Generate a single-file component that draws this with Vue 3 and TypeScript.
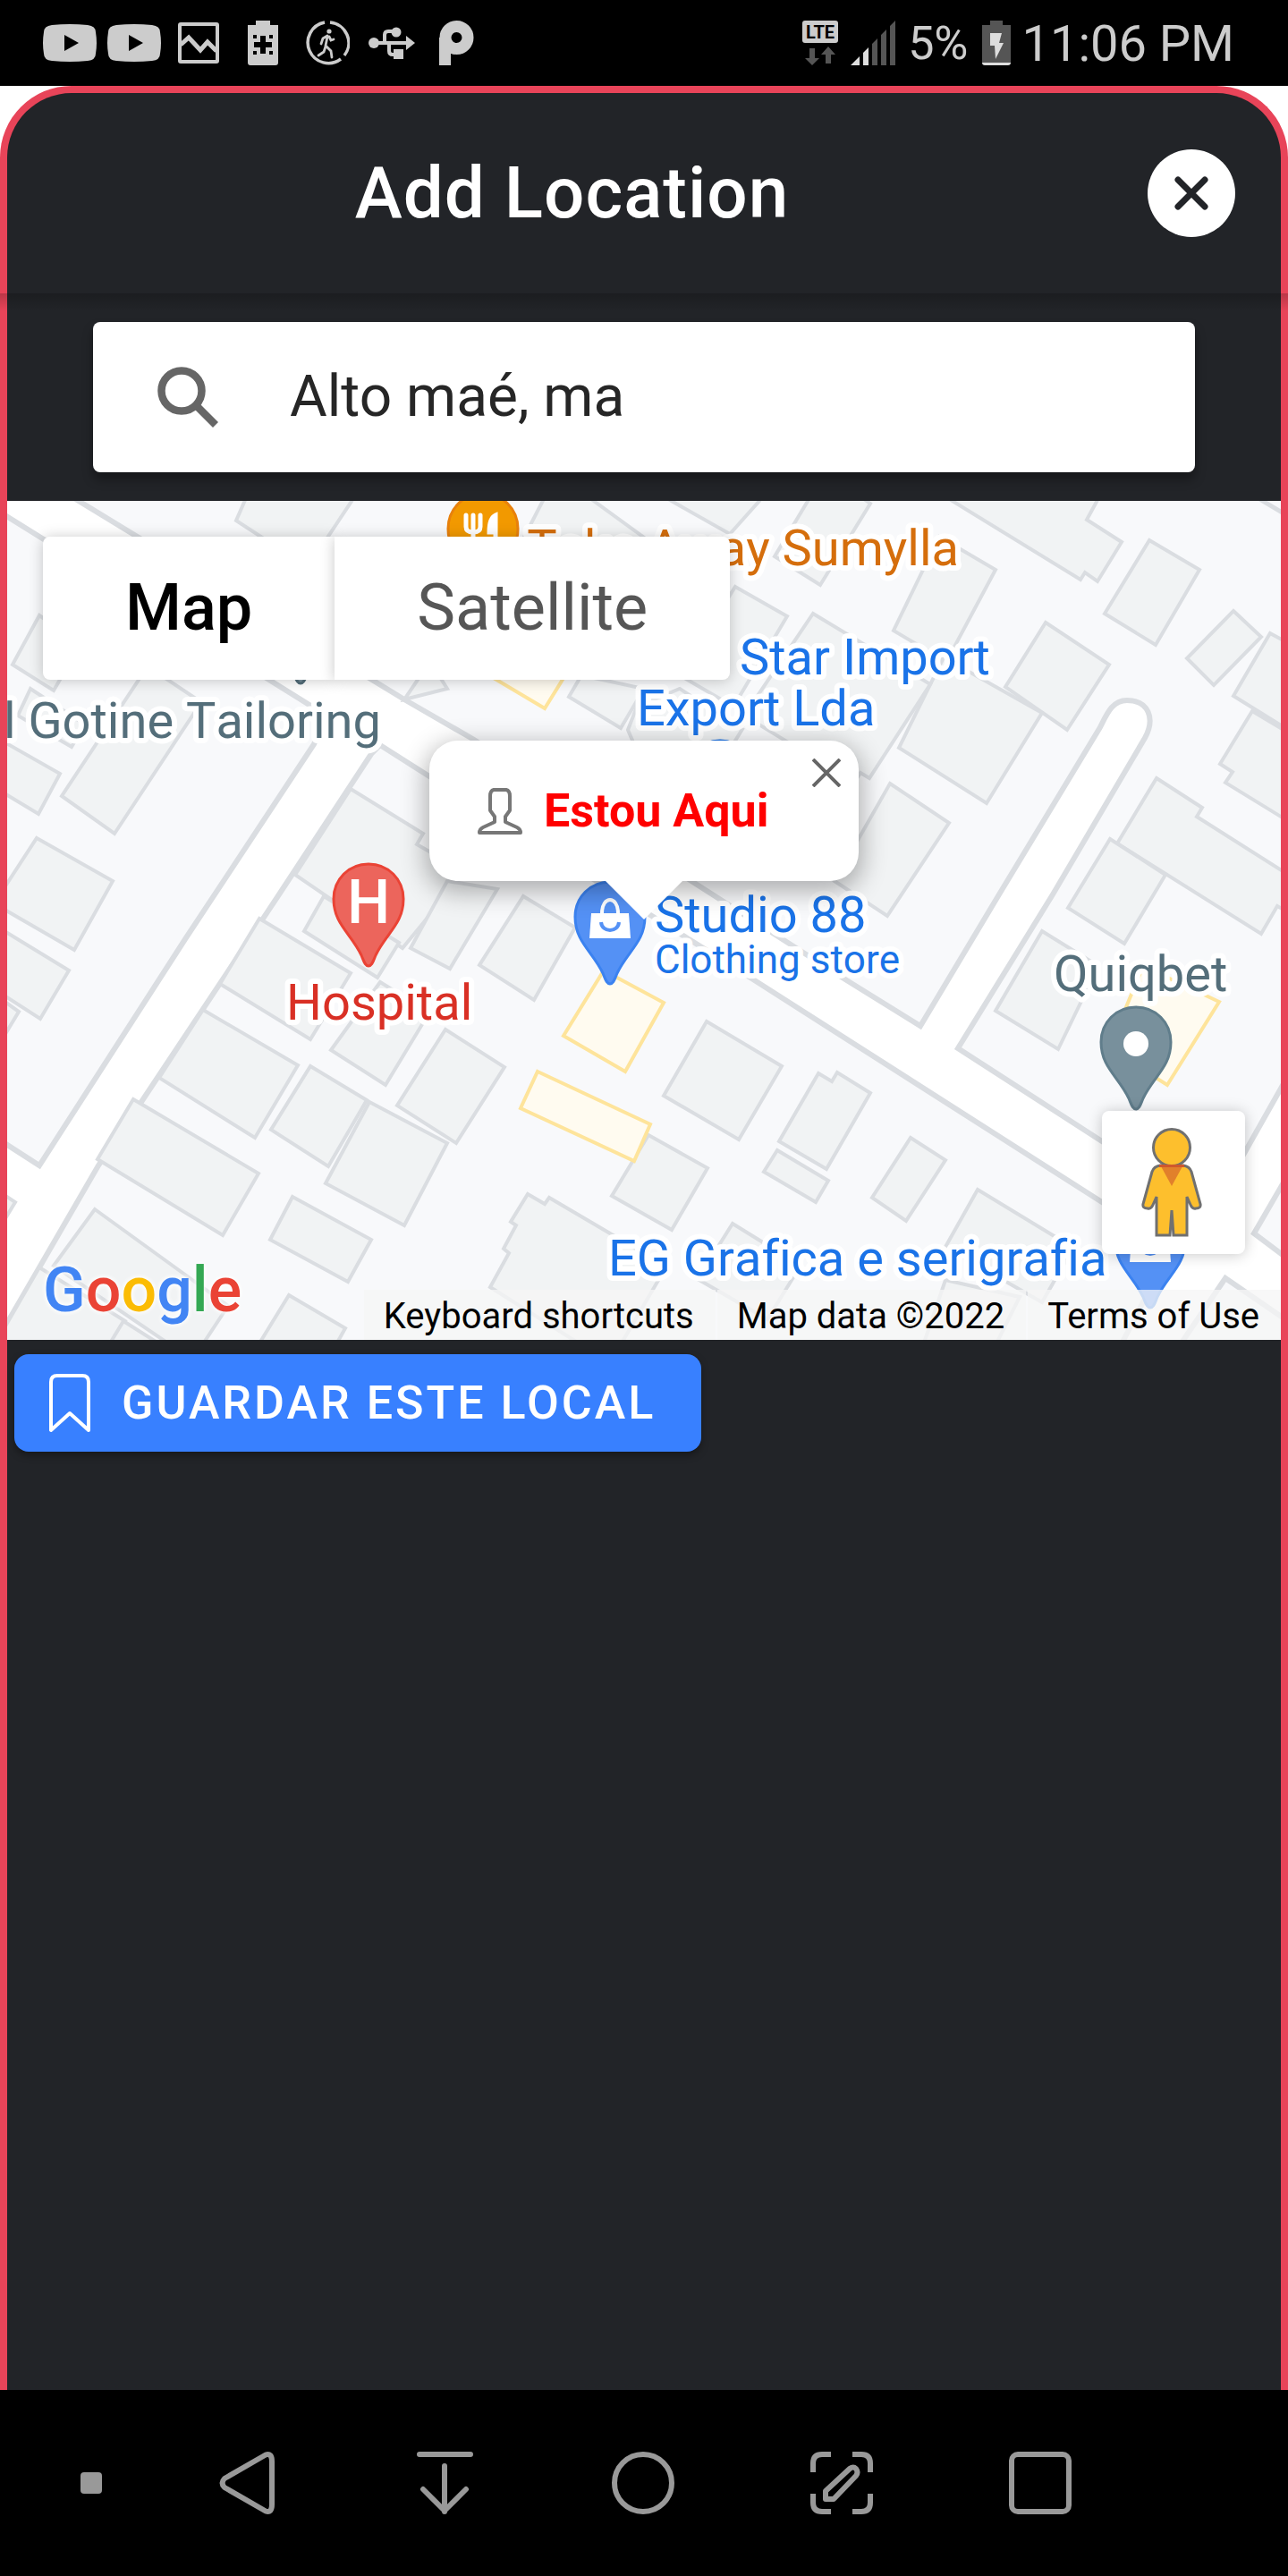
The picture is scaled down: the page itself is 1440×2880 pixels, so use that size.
<script setup lang="ts">
import { ref } from 'vue'

type MapLabel = {
  text: string
  x: number
  y: number
  color: string
  anchor?: 'start' | 'end'
  small?: boolean
}

type Pin = { x: number; y: number; fill: string; edge: string; glyph: 'food' | 'hospital' | 'bag' | 'dot' }

const query = ref('Alto maé, ma')
const mapType = ref<'map' | 'satellite'>('map')
const infoOpen = ref(true)

const BLUE = '#1a73e8'
const SLATE = '#546e7a'

const buildings: string[] = [
  '278,550 264,582 330,625 360,610 400,550',
  '44,688 14,743 60,772 90,720',
  '34,770 20,800 80,835 95,810',
  '165,745 69,890 128,932 225,785',
  '0,827 67,865 43,910 0,884',
  '41,937 126,985 83,1062 0,1014 0,1000',
  '0,1038 77,1085 45,1139 0,1110',
  '0,1116 21,1131 0,1166',
  '0,1333 17,1344 0,1372',
  '392,882 473,932 466,944 520,975 450,1060 330,978',
  '362,1002 446,1054 422,1093 340,1041',
  '290,1027 392,1088 347,1162 246,1100',
  '500,985 556,994 503,1083 459,1060',
  '585,1002 643,1037 597,1118 536,1079',
  '227,1129 333,1191 285,1272 178,1205',
  '425,1098 480,1132 431,1213 370,1174',
  '498,1151 564,1193 510,1278 444,1236',
  '347,1192 410,1230 367,1304 303,1263',
  '413,1232 500,1278 452,1370 364,1323',
  '149,1229 289,1312 249,1381 109,1296',
  '327,1338 415,1386 389,1433 302,1386',
  '106,1352 255,1460 222,1510 200,1510 60,1415',
  '44,1417 140,1477 120,1520 0,1520 0,1493',
  '138,1477 190,1510 118,1510',
  '323,1448 386,1485 372,1510 285,1510',
  '590,1335 609,1346 614,1339 745,1416 690,1510 660,1510 548,1439 569,1401 563,1396 577,1370 571,1366',
  '725,1269 791,1306 751,1375 684,1337',
  '790,1142 874,1192 826,1274 742,1225',
  '915,1200 930,1209 936,1199 973,1222 924,1307 871,1276',
  '869,1286 926,1320 912,1344 854,1310',
  '1018,1272 1057,1297 1013,1365 975,1339',
  '1093,1330 1200,1395 1165,1456 1057,1394',
  '819,1368 895,1415 858,1475 780,1430',
  '1057,1431 1140,1450 1110,1510 1030,1510',
  '740,554 816,597 858,550',
  '908,552 955,550 973,563 917,654 866,622',
  '1050,551 1208,648 1213,640 1227,650 1254,606 1215,581 1232,550',
  '1285,604 1341,637 1292,721 1235,686',
  '1379,683 1410,712 1357,766 1327,736',
  '1420,708 1450,724 1450,822 1379,778',
  '1400,795 1450,825 1450,924 1370,875 1378,863 1364,854',
  '1050,600 1113,637 1058,740 999,705',
  '1169,696 1240,743 1193,816 1124,768',
  '1055,735 1165,797 1103,898 1005,836',
  '822,656 880,689 820,790 760,755',
  '909,686 1040,765 972,870 962,864 955,875 832,800',
  '995,876 1061,920 992,1024 933,985',
  '1293,870 1344,903 1338,913 1450,984 1450,1025 1428,1013 1410,1044 1249,943',
  '1241,938 1303,978 1257,1055 1194,1015',
  '1165,1041 1228,1080 1183,1173 1113,1130',
  '612,550 650,550 760,630 720,670 580,612',
  '480,738 467,760 452,782 500,770',
  '650,755 636,779 694,814 720,770',
  '712,790 702,816 708,830 790,880 830,815 760,770',
]

const highlighted: string[] = [
  '675,1085 742,1121 699,1198 630,1158',
  '601,1198 727,1257 709,1298 582,1239',
  '1278,1080 1363,1120 1305,1213 1240,1172',
  '590,720 545,754 609,792 640,742',
]

const pins: Pin[] = [
  { x: 540, y: 667, fill: '#f29900', edge: '#e8810c', glyph: 'food' },
  { x: 336, y: 765, fill: '#78909c', edge: '#546e7a', glyph: 'dot' },
  { x: 805, y: 943, fill: '#5491f5', edge: '#1a73e8', glyph: 'bag' },
  { x: 412, y: 1081, fill: '#ec655c', edge: '#ea4335', glyph: 'hospital' },
  { x: 682, y: 1101, fill: '#5491f5', edge: '#3b82f0', glyph: 'bag' },
  { x: 1270, y: 1241, fill: '#78909c', edge: '#607d8b', glyph: 'dot' },
  { x: 1286, y: 1463, fill: '#5491f5', edge: '#3b82f0', glyph: 'bag' },
]

const labels: MapLabel[] = [
  { text: 'Take Away Sumylla', x: 1072, y: 632, color: '#d56e0c', anchor: 'end' },
  { text: 'Star Import', x: 827, y: 754, color: BLUE },
  { text: 'Export Lda', x: 712, y: 811, color: BLUE },
  { text: 'l Gotine Tailoring', x: 426, y: 825, color: SLATE, anchor: 'end' },
  { text: 'Hospital', x: 320, y: 1140, color: '#d93025' },
  { text: 'Studio 88', x: 732, y: 1042, color: BLUE },
  { text: 'Clothing store', x: 732, y: 1088, color: BLUE, small: true },
  { text: 'Quiqbet', x: 1178, y: 1108, color: SLATE },
  { text: 'EG Grafica e serigrafia', x: 680, y: 1426, color: BLUE },
]

const logo = [
  { ch: 'G', color: '#4285f4' },
  { ch: 'o', color: '#ea4335' },
  { ch: 'o', color: '#fbbc04' },
  { ch: 'g', color: '#4285f4' },
  { ch: 'l', color: '#34a853' },
  { ch: 'e', color: '#ea4335' },
]
</script>

<template>
  <div class="device">
    <header class="status">
      <div class="status-left">
        <svg v-for="n in 2" :key="n" class="ic-tube" width="60" height="42" viewBox="0 0 60 42">
          <path fill-rule="evenodd" d="M10 1Q30-1 50 1Q59 2 59 9Q61 21 59 33Q59 40 50 41Q30 43 10 41Q1 40 1 33Q-1 21 1 9Q1 2 10 1ZM24 12V30L40 21Z" fill="#ccc" />
        </svg>
        <svg class="ic-image" width="46" height="46" viewBox="0 0 46 46" fill="none" stroke="#ccc">
          <rect x="2" y="2" width="42" height="42" rx="1" stroke-width="4" />
          <path d="M3 25L12 17L25 31L33 22L43 32" stroke-width="5" />
        </svg>
        <svg class="ic-batt" width="34" height="50" viewBox="0 0 34 50">
          <path d="M9 0H25V5H34V47Q34 50 31 50H3Q0 50 0 47V5H9Z" fill="#ccc" />
          <path d="M14 17H20V24H27V30H20V37H14V30H7V24H14ZM6 16H10V20H6ZM24 16H28V20H24ZM6 34H10V38H6ZM24 34H28V38H24Z" fill="#000" />
        </svg>
        <svg class="ic-walk" width="50" height="50" viewBox="0 0 50 50" fill="none" stroke="#ccc" stroke-linecap="round">
          <path d="M22 2A23 23 0 1 0 40 43" stroke-width="3.5" stroke-linecap="butt" />
          <path d="M28 2A23 23 0 0 1 44 39" stroke-width="3.5" stroke-linecap="butt" />
          <circle cx="27" cy="12" r="2.6" fill="#ccc" stroke="none" />
          <path d="M25 18L23 28L29 34L30 41M23 29L21 35L15 39M25 17L20 20L18 26M27 18L29 22L32 21" stroke-width="2.8" />
        </svg>
        <svg class="ic-usb" width="52" height="36" viewBox="0 0 52 36" fill="none" stroke="#ccc" stroke-width="4">
          <path d="M6 18H44M18 18V9Q18 5 22 5H28M23 18V27Q23 31 27 31H30" />
          <circle cx="6" cy="18" r="6" fill="#ccc" stroke="none" />
          <circle cx="31" cy="6" r="5.5" fill="#ccc" stroke="none" />
          <path d="M42 10L52 18L42 26ZM28 25H39V36H28Z" fill="#ccc" stroke="none" />
        </svg>
        <svg class="ic-p" width="40" height="50" viewBox="0 0 40 50" fill="none" stroke="#ccc" stroke-width="13">
          <circle cx="19.500" cy="19" r="12.500" />
          <path d="M6.500 19V50" />
          <path d="M7 31H14" stroke-width="7" />
        </svg>
      </div>
      <div class="status-right">
        <svg class="ic-lte" width="40" height="50" viewBox="0 0 40 50">
          <rect width="40" height="25" rx="3" fill="#ccc" />
          <text x="20" y="20" text-anchor="middle" class="lte">LTE</text>
          <path d="M8 31H14V42H19L11 50L3 42H8ZM26 48H32V38H37L29 29L21 38H26Z" fill="#555" />
        </svg>
        <svg class="ic-signal" width="50" height="50" viewBox="0 0 50 50">
          <path d="M0 50L10 40V50ZM14 36L20 30V50H14Z" fill="#ddd" />
          <path d="M24 26L30 20V50H24ZM34 16L40 10V50H34ZM44 6L50 0V50H44Z" fill="#555" />
        </svg>
        <span class="percent">5%</span>
        <svg class="ic-charge" width="32" height="50" viewBox="0 0 32 50">
          <path d="M9 0H23V5H32V47H0V5H9Z" fill="#555" />
          <path d="M0 47H32Q32 50 29 50H3Q0 50 0 47Z" fill="#ddd" />
          <path d="M9 14H22L19 25H24L15 43L14 28H9Z" fill="#ddd" />
        </svg>
        <time class="clock">11:06 PM</time>
      </div>
    </header>

    <div class="sheet-wrap">
      <main class="sheet">
        <div class="toolbar">
          <h1>Add Location</h1>
          <button class="close" type="button" aria-label="Close">
            <svg width="38" height="38" viewBox="0 0 38 38" stroke="#222428" stroke-width="7" stroke-linecap="round">
              <path d="M4 4L34 34M34 4L4 34" />
            </svg>
          </button>
        </div>

        <div class="search-row">
          <label class="search">
            <svg width="68" height="68" viewBox="0 0 68 68" fill="none" stroke="#666">
              <circle cx="27" cy="27" r="22.500" stroke-width="8.500" />
              <path d="M42 42L65 65" stroke-width="8.500" />
            </svg>
            <input v-model="query" type="text" aria-label="Search location" />
          </label>
        </div>

        <section class="map" aria-label="Map">
          <svg class="tiles" viewBox="8 560 1424 938" preserveAspectRatio="xMidYMid slice">
            <path
              class="road"
              d="M-20 560L365 800L351 832L207 1050L44 1303L-20 1262V1530L8 1479L44 1417L110 1303L158 1232L312 1000L415 843L425 833L480 868L842 1095L1232 1344L1310 1394L1250 1510H1315L1370 1429L1450 1484V1415L1402 1379L1450 1296V1185L1393 1286L1354 1354L1232 1276L1071 1172L1177 1000L1280 825C1292 803 1284 783 1260 783C1244 783 1238 797 1230 813L1117 1000L1029 1147L945 1095L773 985L530 827L452 782L60 543H-20Z"
            />
            <path class="edge" d="M1405 556L1440 577" />
            <polygon v-for="(b, i) in buildings" :key="'b' + i" class="building" :points="b" />
            <polygon v-for="(b, i) in highlighted" :key="'h' + i" class="shop" :points="b" />

            <g v-for="(p, i) in pins" :key="'p' + i" :transform="`translate(${p.x} ${p.y})`">
              <path
                d="M0-115C22-115 39-98 39-76C39-48 20-38 8-13C5-6 4-1 0-1C-4-1-5-6-8-13C-20-38-39-48-39-76C-39-98-22-115 0-115Z"
                :fill="p.fill" :stroke="p.edge" stroke-width="3"
              />
              <circle v-if="p.glyph === 'dot'" cy="-74" r="14" fill="#fff" />
              <text v-else-if="p.glyph === 'hospital'" y="-49" class="pin-letter">H</text>
              <g v-else-if="p.glyph === 'bag'">
                <path d="M-21-80H21L23-52H-23Z" fill="#fff" />
                <path d="M-9-80C-9-100 9-100 9-80" fill="none" stroke="#fff" stroke-width="4" />
                <path d="M-10-70C-9-58 9-58 10-70" fill="none" :stroke="p.fill" stroke-width="4" />
              </g>
              <g v-else fill="none" stroke="#fff" stroke-width="5" stroke-linecap="round">
                <path d="M-19-91V-78Q-19-72-11-72Q-3-72-3-78V-91M-11-91V-50" />
                <path d="M14-91Q7-88 7-72H14V-50Z" fill="#fff" />
              </g>
            </g>

            <text
              v-for="l in labels" :key="l.text" :x="l.x" :y="l.y" :fill="l.color"
              :text-anchor="l.anchor ?? 'start'" class="label" :class="{ small: l.small }"
            >{{ l.text }}</text>
          </svg>

          <div class="types" role="group" aria-label="Map type">
            <button type="button" :class="{ active: mapType === 'map' }" @click="mapType = 'map'">Map</button>
            <button type="button" :class="{ active: mapType === 'satellite' }" @click="mapType = 'satellite'">Satellite</button>
          </div>

          <div v-if="infoOpen" class="info">
            <svg width="50" height="54" viewBox="0 0 50 54" fill="#fff" stroke="#777" stroke-width="4" stroke-linejoin="round">
              <path d="M18 3H32Q36 4 36 10V26L31 33V39L44 45Q48 47 48 51H2Q2 47 6 45L19 39V33L14 26V10Q14 4 18 3Z" />
            </svg>
            <strong>Estou Aqui</strong>
            <button type="button" class="info-close" aria-label="Close" @click="infoOpen = false">
              <svg width="32" height="32" viewBox="0 0 32 32" stroke="#666" stroke-width="4">
                <path d="M1 1L31 31M31 1L1 31" />
              </svg>
            </button>
          </div>

          <button type="button" class="pegman" aria-label="Street View">
            <svg width="68" height="122" viewBox="0 0 68 122">
              <path d="M21 42H47Q54 43 56 49L66 85Q67 90 61 90Q57 91 55 86L51 77V120H36L34 92L32 120H17V77L13 86Q11 91 7 90Q1 90 2 85L12 49Q14 43 21 42Z" fill="#fdbf2d" stroke="#707070" stroke-width="3" />
              <circle cx="34" cy="22" r="20.500" fill="#fdbf2d" stroke="#707070" stroke-width="3" />
              <path d="M22 43H46L34 65Z" fill="#e1802b" />
              <path d="M20 41H48V44H20Z" fill="#d0582c" />
            </svg>
          </button>

          <a class="google" href="#" aria-label="Google"><span v-for="(c, i) in logo" :key="i" :style="{ color: c.color }">{{ c.ch }}</span></a>

          <div class="credits">
            <button type="button">Keyboard shortcuts</button>
            <span>Map data ©2022</span>
            <a href="#">Terms of Use</a>
          </div>
        </section>

        <button class="save" type="button">
          <svg width="46" height="66" viewBox="0 0 46 66" fill="none" stroke="#fff" stroke-width="4" stroke-linejoin="round">
            <path d="M9 2H37Q44 2 44 9V63L23 44L2 63V9Q2 2 9 2Z" />
          </svg>
          GUARDAR ESTE LOCAL
        </button>
      </main>
    </div>

    <nav class="navbar" aria-label="System navigation">
      <div class="dot-cell"><i class="dot"></i></div>
      <button type="button" aria-label="Back">
        <svg width="72" height="72" viewBox="0 0 72 72">
          <path d="M58 4.500Q65 2 65 12V60Q65 70 58 67.500L12 41Q7 36 12 31Z" />
        </svg>
      </button>
      <button type="button" aria-label="Notifications">
        <svg width="72" height="72" viewBox="0 0 72 72">
          <path d="M8 4H65M36 17V68M12 43L36 67L60 43" />
        </svg>
      </button>
      <button type="button" aria-label="Home">
        <svg width="72" height="72" viewBox="0 0 72 72"><circle cx="36" cy="36" r="32" /></svg>
      </button>
      <button type="button" aria-label="Capture">
        <svg width="72" height="72" viewBox="0 0 72 72">
          <g stroke-linecap="butt">
            <path d="M24 4H14Q4 4 4 14V24M48 4H58Q68 4 68 14V24M24 68H14Q4 68 4 58V48M48 68H58Q68 68 68 58V48" />
          </g>
          <path d="M18 54V45L45 20Q49 17 52 20Q55 24 52 28L27 54Z" />
        </svg>
      </button>
      <button type="button" aria-label="Recent apps">
        <svg width="72" height="72" viewBox="0 0 72 72"><rect x="4" y="4" width="64" height="64" rx="7" /></svg>
      </button>
    </nav>
  </div>
</template>

<style>
body {
  margin: 0;
  background: #fff;
}
</style>

<style scoped>
.device {
  min-height: 100vh;
  display: flex;
  flex-direction: column;
  font-family: Roboto, 'Liberation Sans', sans-serif;
}

button {
  font: inherit;
  border: 0;
  padding: 0;
  margin: 0;
  background: none;
  cursor: pointer;
}

svg {
  display: block;
  flex: none;
}

/* status bar */
.status {
  height: 96px;
  flex: none;
  background: #000;
  color: #ccc;
  display: flex;
  justify-content: space-between;
  align-items: center;
  padding: 0 60px 0 48px;
}

.status-left,
.status-right {
  display: flex;
  align-items: center;
}

.ic-tube {
  margin-right: 12px;
}

.ic-image {
  margin: 0 32px 0 7px;
}

.ic-batt {
  margin-right: 30px;
}

.ic-walk {
  margin-right: 21px;
}

.ic-usb {
  margin-right: 27px;
}

.ic-lte {
  margin-right: 14px;
}

.lte {
  font: 700 20px Roboto, sans-serif;
  fill: #000;
}

.ic-signal {
  margin-right: 14px;
}

.percent,
.clock {
  padding-top: 2px;
}

.percent {
  font-size: 52px;
  line-height: 60px;
  margin-right: 16px;
}

.ic-charge {
  margin-right: 12px;
}

.clock {
  font-size: 56px;
  line-height: 64px;
}

/* sheet */
.sheet-wrap {
  flex: 1;
  display: flex;
  background: #fff;
}

.sheet {
  flex: 1;
  min-width: 0;
  border: 8px solid #e84459;
  border-bottom: 0;
  border-radius: 80px 80px 0 0;
  background: #222428;
}

.toolbar {
  position: relative;
  height: 224px;
  display: flex;
  align-items: center;
  padding-right: 51px;
}

.toolbar::after {
  content: '';
  position: absolute;
  top: 100%;
  left: -8px;
  right: -8px;
  height: 20px;
  background: linear-gradient(rgba(0, 0, 0, 0.2), rgba(0, 0, 0, 0));
}

h1 {
  flex: 1;
  margin: 0 12px 0 0;
  text-align: center;
  color: #fff;
  font-size: 80px;
  line-height: 96px;
  font-weight: 500;
  letter-spacing: 1px;
}

.close {
  width: 98px;
  height: 98px;
  border-radius: 50%;
  background: #fff;
  display: flex;
  align-items: center;
  justify-content: center;
}

.search-row {
  padding: 32px 96px;
}

.search {
  display: flex;
  align-items: center;
  height: 168px;
  padding: 0 72px;
  gap: 80px;
  box-sizing: border-box;
  background: #fff;
  border-radius: 8px;
  box-shadow: 0 8px 12px rgba(0, 0, 0, 0.35);
}

.search input {
  flex: 1;
  min-width: 0;
  border: 0;
  padding: 0;
  outline: 0;
  background: none;
  color: #262626;
  font: 400 64px/76px Roboto, sans-serif;
}

/* map */
.map {
  position: relative;
  aspect-ratio: 1424 / 938;
  overflow: hidden;
  background: #f8f9fb;
}

.tiles {
  width: 100%;
  height: 100%;
}

.road {
  fill: #fff;
  stroke: #dadde1;
  stroke-width: 6;
}

.edge {
  stroke: #dadde1;
  stroke-width: 5;
}

.building {
  fill: #f1f3f4;
  stroke: #dadde1;
  stroke-width: 4;
}

.shop {
  fill: #fffbf0;
  stroke: #fee49b;
  stroke-width: 4;
}

.label {
  font: 400 56px Roboto, sans-serif;
  font-kerning: none;
  font-variant-ligatures: none;
  stroke: #fff;
  stroke-width: 12px;
  stroke-linejoin: round;
  paint-order: stroke;
}

.label.small {
  font-size: 44px;
}

.pin-letter {
  font: 500 68px Roboto, sans-serif;
  fill: #fff;
  text-anchor: middle;
}

.types {
  position: absolute;
  top: 40px;
  left: 40px;
  display: flex;
}

.types button {
  height: 160px;
  padding: 0 92px;
  background: #fff;
  color: #565656;
  font-size: 72px;
  line-height: 84px;
  box-shadow: 0 1px 16px rgba(0, 0, 0, 0.22);
}

.types button:first-child {
  border-radius: 8px 0 0 8px;
}

.types button:last-child {
  border-radius: 0 8px 8px 0;
}

.types button.active {
  color: #000;
  font-weight: 500;
}

.info {
  position: absolute;
  top: 268px;
  left: 50%;
  width: 480px;
  height: 157px;
  margin-left: -240px;
  padding: 0 54px;
  box-sizing: border-box;
  display: flex;
  align-items: center;
  gap: 24px;
  background: #fff;
  border-radius: 32px;
  box-shadow: 0 8px 28px 4px rgba(0, 0, 0, 0.3);
}

.info::after {
  content: '';
  position: absolute;
  top: 100%;
  left: 50%;
  width: 86px;
  height: 43px;
  margin-left: -43px;
  background: #fff;
  clip-path: polygon(0 0, 100% 0, 50% 100%);
}

.info strong {
  color: #f00;
  font-size: 52px;
  line-height: 60px;
  font-weight: 700;
}

.info-close {
  position: absolute;
  top: 20px;
  right: 20px;
}

.pegman {
  position: absolute;
  right: 40px;
  bottom: 96px;
  width: 160px;
  height: 160px;
  display: flex;
  align-items: center;
  justify-content: center;
  padding-right: 4px;
  background: #fff;
  border-radius: 8px;
  box-shadow: 0 1px 16px rgba(0, 0, 0, 0.22);
}

.google {
  position: absolute;
  left: 40px;
  bottom: 14px;
  font-size: 70px;
  line-height: 84px;
  font-weight: 500;
  text-decoration: none;
  text-shadow: 0 0 6px #fff, 0 0 6px #fff;
}

.credits {
  position: absolute;
  right: 0;
  bottom: 0;
  display: flex;
  gap: 2px;
  color: #000;
  font-size: 40px;
  line-height: 52px;
}

.credits > * {
  padding: 4px 24px 0 22px;
  background: rgba(245, 245, 245, 0.75);
  color: inherit;
  text-decoration: none;
  white-space: nowrap;
}

/* save */
.save {
  height: 109px;
  margin: 16px 8px;
  padding: 0 51px 0 39px;
  display: flex;
  align-items: center;
  gap: 35px;
  border-radius: 16px;
  background: #3880ff;
  color: #fff;
  font-size: 52px;
  line-height: 60px;
  font-weight: 500;
  letter-spacing: 3px;
  box-shadow: 0 4px 8px rgba(0, 0, 0, 0.35);
}

/* navigation */
.navbar {
  height: 208px;
  flex: none;
  display: flex;
  align-items: center;
  padding-right: 166px;
  background: #000;
}

.dot-cell {
  width: 74px;
  padding-left: 90px;
}

.dot {
  display: block;
  width: 24px;
  height: 24px;
  border-radius: 4px;
  background: #999;
}

.navbar button {
  flex: 1;
  display: flex;
  justify-content: center;
}

.navbar svg {
  fill: none;
  stroke: #999;
  stroke-width: 6;
  stroke-linecap: round;
  stroke-linejoin: round;
}
</style>
